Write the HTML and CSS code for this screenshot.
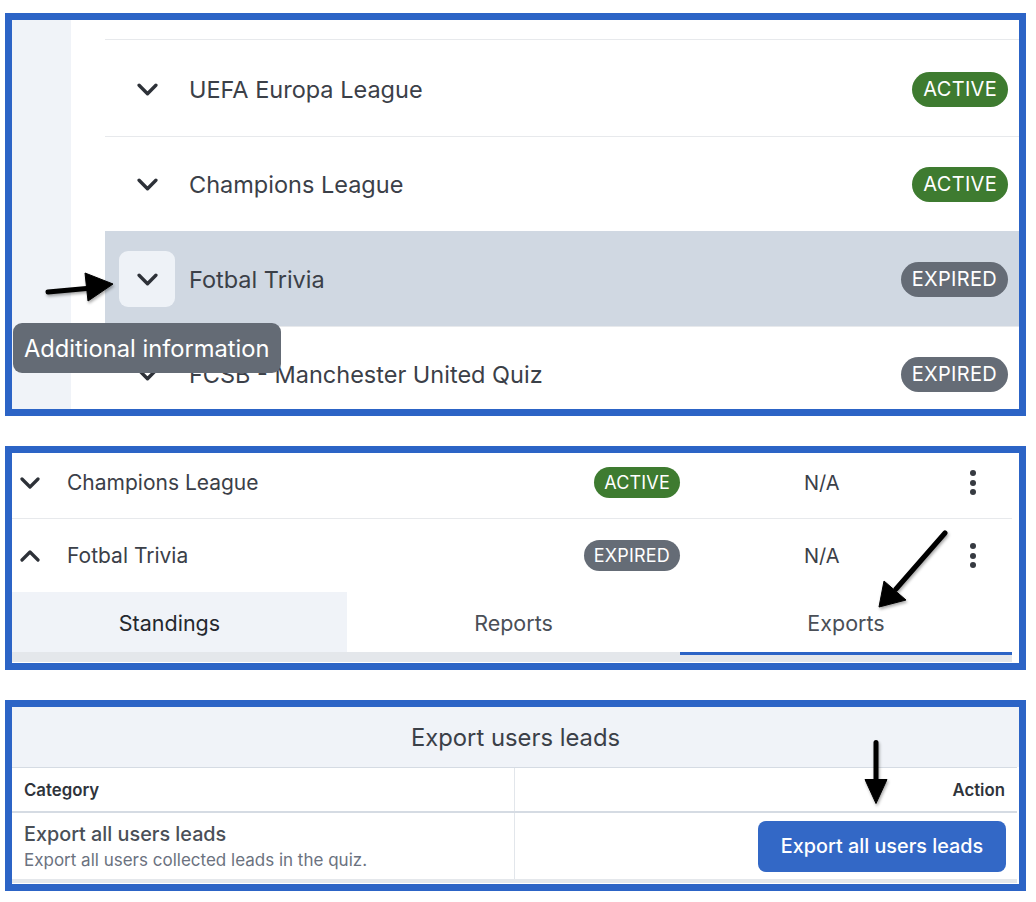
FILE: index.html
```html
<!DOCTYPE html>
<html lang="en">
<head>
<meta charset="utf-8">
<title>Quiz leads export</title>
<link rel="stylesheet" href="styles.css">
</head>
<body>
<section class="panel panel-list">
  <aside class="side"></aside>
  <div class="list">
    <div class="row row-cut"></div>
    <div class="row">
      <span class="chev-btn"><svg class="chev" viewBox="0 0 20 12"><path d="M2 2 L10 10 L18 2"/></svg></span>
      <span class="name">UEFA Europa League</span>
      <span class="badge badge-active">ACTIVE</span>
    </div>
    <div class="row">
      <span class="chev-btn"><svg class="chev" viewBox="0 0 20 12"><path d="M2 2 L10 10 L18 2"/></svg></span>
      <span class="name">Champions League</span>
      <span class="badge badge-active">ACTIVE</span>
    </div>
    <div class="row row-hl">
      <span class="chev-btn chev-btn-focus"><svg class="chev" viewBox="0 0 20 12"><path d="M2 2 L10 10 L18 2"/></svg></span>
      <span class="name">Fotbal Trivia</span>
      <span class="badge badge-expired">EXPIRED</span>
    </div>
    <div class="row">
      <span class="chev-btn"><svg class="chev" viewBox="0 0 20 12"><path d="M2 2 L10 10 L18 2"/></svg></span>
      <span class="name">FCSB - Manchester United Quiz</span>
      <span class="badge badge-expired">EXPIRED</span>
    </div>
  </div>
  <div class="tooltip">Additional information</div>
  <svg class="overlay" viewBox="0 0 1007 389">
    <path class="arrow-shaft" d="M36 272 L80 268"/>
    <polygon class="arrow-head" points="73,253 101,264 76,281"/>
  </svg>
</section>

<section class="panel panel-rows">
  <div class="rows">
    <div class="trow trow-first">
      <span class="tchev"><svg class="chev-sm" viewBox="0 0 20 12"><path d="M2 2 L10 10 L18 2"/></svg></span>
      <span class="tname">Champions League</span>
      <span class="tbadge"><span class="badge badge-sm badge-active">ACTIVE</span></span>
      <span class="tspace"></span>
      <span class="tval">N/A</span>
      <span class="kebab"><i></i><i></i><i></i></span>
    </div>
    <div class="trow">
      <span class="tchev"><svg class="chev-sm" viewBox="0 0 20 12"><path d="M2 10 L10 2 L18 10"/></svg></span>
      <span class="tname">Fotbal Trivia</span>
      <span class="tbadge"><span class="badge badge-sm badge-expired">EXPIRED</span></span>
      <span class="tspace"></span>
      <span class="tval">N/A</span>
      <span class="kebab"><i></i><i></i><i></i></span>
    </div>
    <div class="tabs">
      <div class="tab tab-first">Standings</div>
      <div class="tab">Reports</div>
      <div class="tab tab-active">Exports</div>
    </div>
    <div class="strip"></div>
  </div>
  <svg class="overlay" viewBox="0 0 1007 208">
    <path class="arrow-shaft" d="M933 79 L884 135"/>
    <polygon class="arrow-head" points="872,127 894,146 867,153"/>
  </svg>
</section>

<section class="panel panel-export">
  <div class="ex-title">Export users leads</div>
  <div class="ex-table">
    <div class="ex-head">
      <div class="ex-cell ex-cat">Category</div>
      <div class="ex-cell ex-act">Action</div>
    </div>
    <div class="ex-body">
      <div class="ex-cell ex-info">
        <div class="ex-name">Export all users leads</div>
        <div class="ex-sub">Export all users collected leads in the quiz.</div>
      </div>
      <div class="ex-cell ex-btn-cell">
        <button class="ex-btn">Export all users leads</button>
      </div>
    </div>
    <div class="ex-foot"></div>
  </div>
  <svg class="overlay" viewBox="0 0 1007 176">
    <path class="arrow-shaft" d="M864 35 L864 74"/>
    <polygon class="arrow-head" points="853,72 875,72 864,96"/>
  </svg>
</section>
</body>
</html>
```

FILE: styles.css
```css
* { box-sizing: border-box; }

body {
  margin: 0;
  padding: 13px 0 0 5px;
  background: #ffffff;
  font-family: Inter, "Noto Sans", "Liberation Sans", sans-serif;
  color: #3b4048;
}

.panel {
  position: relative;
  width: 1021px;
  border: 7px solid #2c64c6;
  background: #ffffff;
  overflow: hidden;
}

.overlay {
  position: absolute;
  left: 0;
  top: 0;
  width: 100%;
  height: 100%;
  pointer-events: none;
  filter: drop-shadow(1px 2px 1.5px rgba(0,0,0,0.35));
}
.arrow-shaft { stroke: #000; stroke-width: 5; fill: none; stroke-linecap: round; }
.arrow-head { fill: #000; stroke: #000; stroke-width: 1; stroke-linejoin: round; }

/* ---------- panel 1 ---------- */
.panel-list {
  height: 403px;
  display: flex;
}
.side {
  width: 59px;
  flex: none;
  background: #f0f3f8;
}
.list {
  flex: 1;
  padding-left: 34px;
  overflow: hidden;
}
.row {
  height: 95px;
  flex: none;
  display: flex;
  align-items: center;
  padding: 0 11px 0 14px;
  border-top: 1px solid #e7e9ec;
}
.row-cut {
  height: 20px;
  border-top: none;
  border-bottom: 1px solid #e7e9ec;
}
.row-cut + .row { border-top: none; height: 96px; padding-top: 2px; }
.row-hl {
  background: #d0d8e2;
  border-top-color: #d0d8e2;
}
.chev-btn {
  width: 56px;
  height: 56px;
  border-radius: 9px;
  display: flex;
  align-items: center;
  justify-content: center;
  flex: none;
}
.chev-btn-focus { background: #eef2f7; }
.chev {
  width: 21px;
  height: 13px;
}
.chev path, .chev-sm path {
  fill: none;
  stroke: #2d3138;
  stroke-width: 3.2;
  stroke-linecap: round;
  stroke-linejoin: round;
}
.name {
  margin-left: 14px;
  font-size: 23.5px;
  color: #3b4048;
}
.badge {
  margin-left: auto;
  height: 35px;
  padding: 0 11px;
  border-radius: 18px;
  display: inline-flex;
  align-items: center;
  font-size: 20px;
  letter-spacing: 0.3px;
  color: #ffffff;
}
.badge-active { background: #3e7b30; }
.badge-expired { background: #656c76; }

.tooltip {
  position: absolute;
  left: 1px;
  top: 303px;
  height: 50px;
  padding: 0 11px;
  border-radius: 9px;
  background: #646b75;
  color: #ffffff;
  font-size: 23.7px;
  display: flex;
  align-items: center;
}

/* ---------- panel 2 ---------- */
.panel-rows {
  margin-top: 30px;
  height: 224px;
  padding-right: 7px;
}
.trow {
  display: grid;
  grid-template-columns: 55px 489px 124px 124px 142px 54px 12px;
  align-items: center;
  height: 73px;
}
.trow-first {
  height: 66px;
  padding-bottom: 6px;
  border-bottom: 1px solid #e7e9ec;
}
.tchev {
  padding-left: 8px;
  display: flex;
}
.chev-sm { width: 20px; height: 12px; }
.tname { font-size: 21px; color: #3b4048; }
.tbadge { display: flex; justify-content: flex-end; }
.badge-sm {
  height: 31px;
  padding: 0 10px;
  font-size: 18px;
  letter-spacing: 0.2px;
  border-radius: 16px;
}
.tval { font-size: 20px; color: #3b4048; }
.kebab {
  display: flex;
  flex-direction: column;
  align-items: center;
  gap: 3.5px;
}
.kebab i {
  width: 6px;
  height: 6px;
  border-radius: 50%;
  background: #363a41;
}
.tabs {
  display: grid;
  grid-template-columns: 335px 333px 332px;
  height: 63px;
}
.tab {
  display: flex;
  align-items: center;
  justify-content: center;
  font-size: 21.5px;
  color: #4a4f57;
  border-bottom: 3px solid #e4e7eb;
  padding-top: 2px;
}
.tab-first { background: #f0f3f8; color: #24282e; padding-right: 20px; }
.tab-active { border-bottom-color: #2c64c6; }
.strip {
  height: 7px;
  background: #e4e7eb;
}

/* ---------- panel 3 ---------- */
.panel-export {
  margin-top: 30px;
  height: 191px;
}
.ex-title {
  height: 60px;
  background: #f0f3f8;
  display: flex;
  align-items: center;
  justify-content: center;
  font-size: 23.8px;
  color: #3b4048;
}
.ex-table {
  margin-right: 2px;
  border-top: 1px solid #d5dbe3;
}
.ex-head, .ex-body {
  display: grid;
  grid-template-columns: 503px 1fr;
}
.ex-head {
  height: 45px;
  border-bottom: 2px solid #d5dbe3;
}
.ex-cell { display: flex; align-items: center; }
.ex-cat, .ex-act {
  font-size: 16.8px;
  font-weight: 600;
  color: #2f343b;
}
.ex-cat { padding-left: 12px; border-right: 1px solid #e2e6eb; }
.ex-act { justify-content: flex-end; padding-right: 12px; }
.ex-body { height: 66px; }
.ex-info {
  flex-direction: column;
  align-items: flex-start;
  justify-content: center;
  padding-left: 12px;
  border-right: 1px solid #e2e6eb;
  gap: 4px;
}
.ex-name { font-size: 19.8px; font-weight: 500; color: #4a4f57; }
.ex-sub { font-size: 17px; color: #6b7280; }
.ex-btn-cell { justify-content: flex-end; padding-right: 11px; }
.ex-btn {
  width: 248px;
  height: 51px;
  border: none;
  border-radius: 8px;
  background: #3368c6;
  color: #ffffff;
  font-family: inherit;
  font-size: 19.8px;
  font-weight: 500;
}
.ex-foot {
  height: 4px;
  background: #e4e7eb;
}
```
